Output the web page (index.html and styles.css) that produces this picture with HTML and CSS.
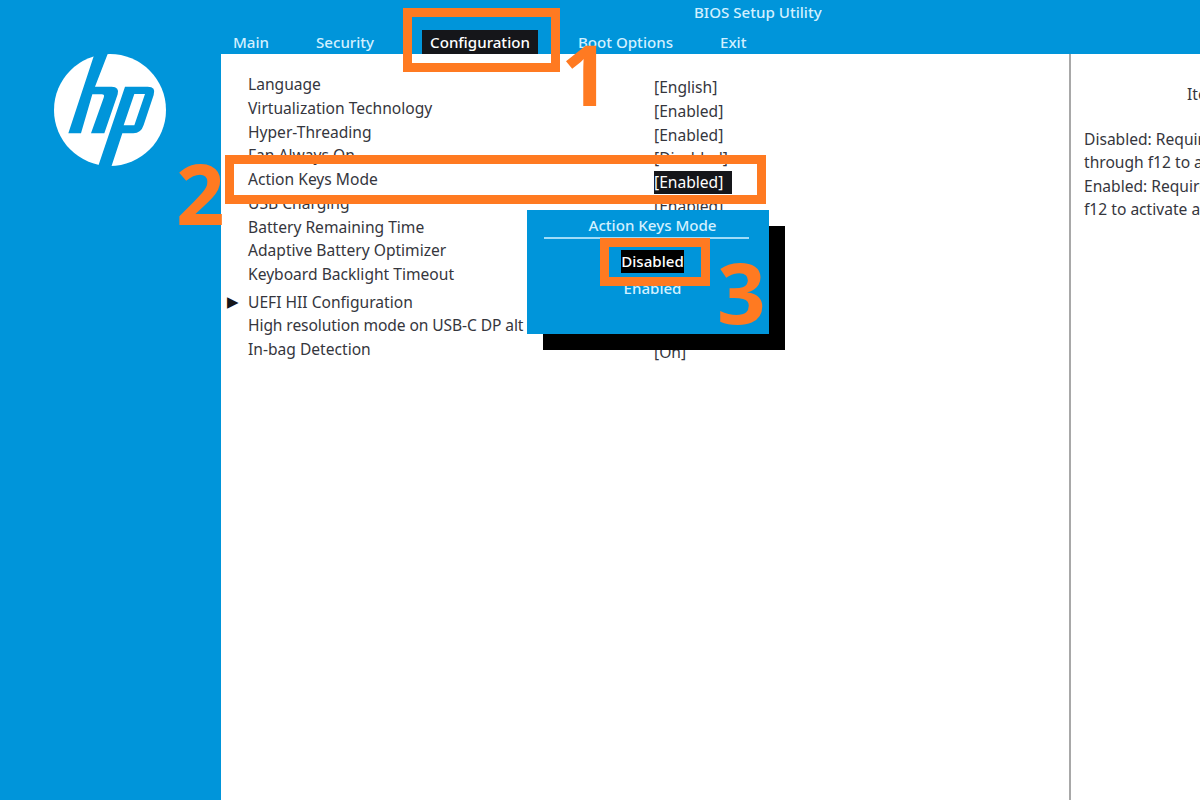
FILE: index.html
```html
<!DOCTYPE html>
<html>
  <head>
    <meta charset='utf-8'/>
    <title>BIOS Setup Utility</title>
    <link rel="stylesheet" href="styles.css">
  </head>
  <body>
    <div class='screen'>
      <div class='sidebar'>
        <svg class='logo' viewBox='0 0 390 390'>
          <circle cx='195' cy='195' r='168' fill='#fff'/>
          <path fill='#0095da' d='M150 22 L190 22 L150 125 L200 125 Q224 125 218 148 L178 265 L138 265 L176 158 Q180 148 170 148 L142 148 L108 265 L70 265 Z'/>
          <path fill='#0095da' fill-rule='evenodd' d='M240 125 L308 125 Q334 125 326 150 L296 240 Q288 265 265 265 L232 265 L198 368 L158 368 Z M268 147 L300 147 L268 241 L236 241 Z'/>
        </svg>
      </div>

      <div class='main'>
        <div class='topbar'>
          <div class='title'>BIOS Setup Utility</div>
          <div class='tabs'>
            <span class='tab'>Main</span>
            <span class='tab'>Security</span>
            <span class='tab tab-active'>Configuration</span>
            <span class='tab'>Boot Options</span>
            <span class='tab'>Exit</span>
          </div>
        </div>

        <div class='content'>
          <div class='settings'>
            <div class='row'><span class='label'>Language</span><span class='value'>[English]</span></div>
            <div class='row'><span class='label'>Virtualization Technology</span><span class='value'>[Enabled]</span></div>
            <div class='row'><span class='label'>Hyper-Threading</span><span class='value'>[Enabled]</span></div>
            <div class='row'><span class='label'>Fan Always On</span><span class='value'>[Disabled]</span></div>
            <div class='row'><span class='label'>Action Keys Mode</span><span class='value'><b class='value-active'>[Enabled]</b></span></div>
            <div class='row'><span class='label'>USB Charging</span><span class='value'>[Enabled]</span></div>
            <div class='row'><span class='label'>Battery Remaining Time</span><span class='value'>[Enabled]</span></div>
            <div class='row'><span class='label'>Adaptive Battery Optimizer</span><span class='value'>[Enabled]</span></div>
            <div class='row'><span class='label'>Keyboard Backlight Timeout</span><span class='value'>[Never]</span></div>
            <div class='row row-sub'><span class='arrow'>&#9654;</span><span class='label'>UEFI HII Configuration</span></div>
            <div class='row'><span class='label label-tight'>High resolution mode on USB-C DP alt</span><span class='value'>[Disabled]</span></div>
            <div class='row'><span class='label'>In-bag Detection</span><span class='value'>[On]</span></div>
          </div>

          <div class='help'>
            <div class='help-title'>Item Specific Help</div>
            <p>Disabled: Requires pressing fn key + f1<br>through f12 to activate action keys.<br>Enabled: Requires pressing only f1 through<br>f12 to activate action keys.</p>
          </div>
        </div>
      </div>

      <div class='popup'>
        <div class='popup-title'>Action Keys Mode</div>
        <div class='popup-option'><span class='popup-selected'>Disabled</span></div>
        <div class='popup-option'>Enabled</div>
      </div>

      <div class='mark mark-tab'></div>
      <div class='mark mark-row'></div>
      <div class='mark mark-option'></div>
      <div class='step step-1'>1</div>
      <div class='step step-2'>2</div>
      <div class='step step-3'>3</div>
    </div>
  </body>
</html>
```

FILE: styles.css
```css
* {
  box-sizing: border-box;
  font-family: 'Noto Sans', sans-serif;
}

body {
  margin: 0;
  overflow: hidden;
}

.screen {
  position: relative;
  display: flex;
  width: 1200px;
  height: 800px;
  overflow: hidden;
  background: #0095da;
}

.sidebar {
  flex: none;
  width: 221px;
  padding: 45px 0 0 45px;
}

.logo {
  display: block;
  width: 130px;
  height: 130px;
}

.main {
  display: flex;
  flex-direction: column;
  flex-grow: 1;
  min-width: 0;
}

.topbar {
  flex: none;
  height: 54px;
  color: #d2f0ff;
  font-size: 15.1px;
  font-weight: 500;
}

.title {
  height: 30px;
  padding: 1px 0 0 473px;
  line-height: 22px;
}

.tabs {
  display: flex;
  gap: 31px;
  padding-left: 4px;
}

.tab {
  height: 24px;
  padding: 0 8px;
  line-height: 24px;
}

.tab-active {
  margin: 0 1px 0 9px;
  background: #15161a;
  color: #fff;
}

.content {
  display: flex;
  flex-grow: 1;
  min-height: 0;
  background: #fff;
  color: #35363d;
  font-size: 15.6px;
}

.settings {
  flex: none;
  width: 848px;
  padding: 19px 0 0 27px;
}

.row {
  display: flex;
  height: 23.75px;
  line-height: 23px;
}

.row-sub {
  position: relative;
  height: 27.5px;
  padding-top: 4px;
}

.arrow {
  position: absolute;
  left: -21px;
  color: #15161a;
  font-family: 'DejaVu Sans', sans-serif;
  font-size: 15px;
}

.label {
  flex: none;
  width: 406px;
  white-space: nowrap;
}

.label-tight {
  letter-spacing: -0.1px;
}

.value {
  padding-top: 3px;
  white-space: nowrap;
}

.value-active {
  display: inline-block;
  width: 78px;
  background: #15161a;
  color: #fff;
  font-weight: 400;
}

.help {
  flex-grow: 1;
  min-width: 0;
  padding: 28px 0 0 13px;
  overflow: hidden;
  border-left: 2px solid #a8a8a8;
  white-space: nowrap;
}

.help-title {
  padding-left: 103px;
  line-height: 24px;
}

.help p {
  margin: 22px 0 0;
  line-height: 23.4px;
}

/* the dialog and the annotations sit over the page */
.popup {
  position: absolute;
  left: 527px;
  top: 210px;
  width: 242px;
  height: 124px;
  padding: 3px 20px 0 17px;
  background: #0095da;
  box-shadow: 16px 16px 0 #000;
  color: #d2f0ff;
  font-size: 15.1px;
  font-weight: 500;
  text-align: center;
}

.popup-title {
  height: 26px;
  margin-bottom: 11px;
  padding-left: 12px;
  border-bottom: 2px solid #9fdcf8;
  line-height: 24px;
}

.popup-option {
  height: 27px;
  padding-left: 12px;
  line-height: 23px;
}

.popup-selected {
  display: inline-block;
  background: #000;
  color: #fff;
}

.mark {
  position: absolute;
  border: 9px solid #ff7a21;
}

.mark-tab {
  left: 403px;
  top: 8px;
  width: 157px;
  height: 64px;
}

.mark-row {
  left: 225px;
  top: 155px;
  width: 541px;
  height: 49px;
}

.mark-option {
  left: 600px;
  top: 238px;
  width: 110px;
  height: 48px;
}

.step {
  position: absolute;
  color: #ff7a21;
  font-family: 'Open Sans', sans-serif;
  font-size: 85px;
  font-weight: 700;
  line-height: 85px;
}

.step-1 {
  left: 561px;
  top: 31px;
}

.step-2 {
  left: 176px;
  top: 150px;
}

.step-3 {
  left: 717px;
  top: 249px;
}
```
